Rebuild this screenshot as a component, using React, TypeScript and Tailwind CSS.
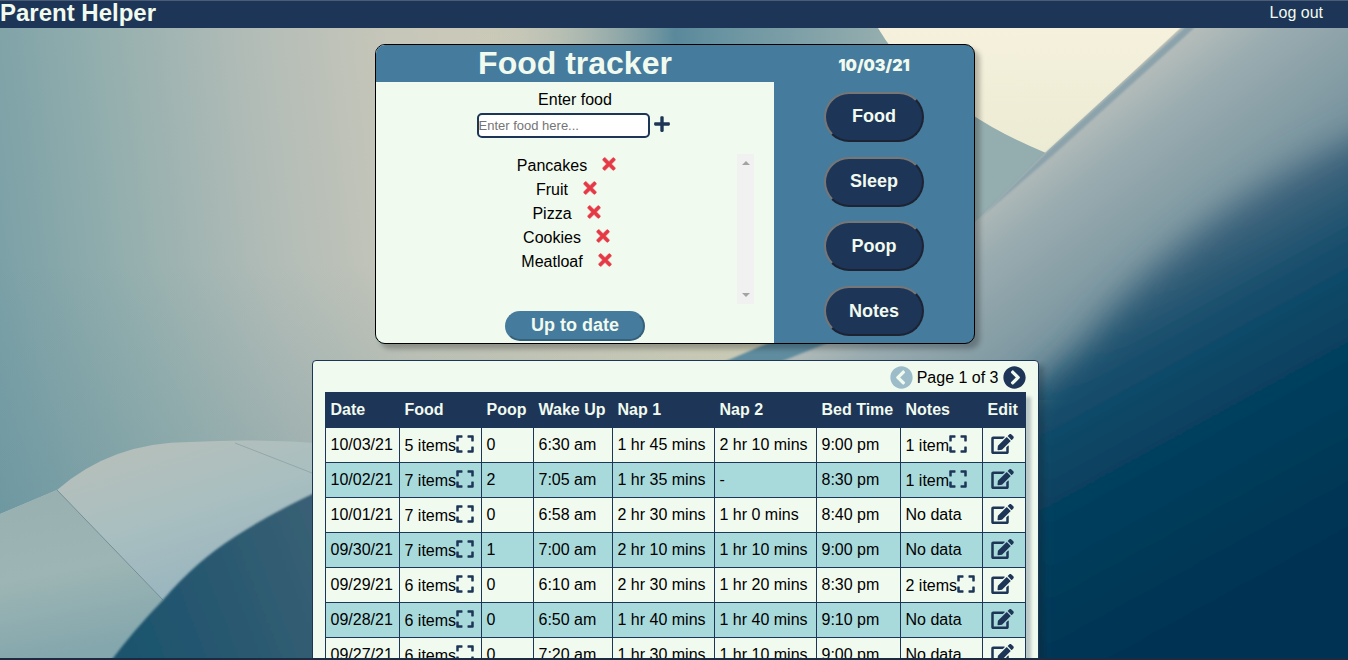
import type { ReactNode } from "react";
import {
  FaChevronCircleLeft,
  FaChevronCircleRight,
  FaEdit,
  FaExpand,
  FaPlus,
  FaTimes,
} from "react-icons/fa";

type Day = {
  date: string;
  food: string;
  poop: string;
  wake: string;
  nap1: string;
  nap2: string;
  bed: string;
  notes: string;
};

const foods = ["Pancakes", "Fruit", "Pizza", "Cookies", "Meatloaf"];
const sections = ["Food", "Sleep", "Poop", "Notes"];

const days: Day[] = [
  { date: "10/03/21", food: "5 items", poop: "0", wake: "6:30 am", nap1: "1 hr 45 mins", nap2: "2 hr 10 mins", bed: "9:00 pm", notes: "1 item" },
  { date: "10/02/21", food: "7 items", poop: "2", wake: "7:05 am", nap1: "1 hr 35 mins", nap2: "-", bed: "8:30 pm", notes: "1 item" },
  { date: "10/01/21", food: "7 items", poop: "0", wake: "6:58 am", nap1: "2 hr 30 mins", nap2: "1 hr 0 mins", bed: "8:40 pm", notes: "No data" },
  { date: "09/30/21", food: "7 items", poop: "1", wake: "7:00 am", nap1: "2 hr 10 mins", nap2: "1 hr 10 mins", bed: "9:00 pm", notes: "No data" },
  { date: "09/29/21", food: "6 items", poop: "0", wake: "6:10 am", nap1: "2 hr 30 mins", nap2: "1 hr 20 mins", bed: "8:30 pm", notes: "2 items" },
  { date: "09/28/21", food: "6 items", poop: "0", wake: "6:50 am", nap1: "1 hr 40 mins", nap2: "1 hr 40 mins", bed: "9:10 pm", notes: "No data" },
  { date: "09/27/21", food: "6 items", poop: "0", wake: "7:20 am", nap1: "1 hr 30 mins", nap2: "1 hr 10 mins", bed: "9:00 pm", notes: "No data" },
];

const columns = [
  { name: "Date", width: "w-[74px]" },
  { name: "Food", width: "w-[82px]" },
  { name: "Poop", width: "w-[52px]" },
  { name: "Wake Up", width: "w-[79px]" },
  { name: "Nap 1", width: "w-[102px]" },
  { name: "Nap 2", width: "w-[102px]" },
  { name: "Bed Time", width: "w-[84px]" },
  { name: "Notes", width: "w-[82px]" },
  { name: "Edit", width: "w-[43px]" },
];

function Backdrop() {
  return (
    <svg
      className="absolute inset-0 h-full w-full"
      viewBox="0 0 1348 660"
      preserveAspectRatio="none"
      aria-hidden="true"
    >
      <defs>
        <linearGradient id="wall" gradientUnits="userSpaceOnUse" x1="-40" y1="200" x2="760" y2="110">
          <stop offset="0" stopColor="#759da5" />
          <stop offset="0.2" stopColor="#94afae" />
          <stop offset="0.38" stopColor="#b2bcb7" />
          <stop offset="0.55" stopColor="#c6c6b9" />
          <stop offset="1" stopColor="#d8d3b8" />
        </linearGradient>
        <linearGradient id="wallShade" x1="0" y1="0" x2="0" y2="1">
          <stop offset="0.4" stopColor="#5c8b98" stopOpacity="0" />
          <stop offset="0.85" stopColor="#5c8b98" stopOpacity="0.35" />
        </linearGradient>
        <linearGradient id="fold" gradientUnits="userSpaceOnUse" x1="470" y1="0" x2="880" y2="0">
          <stop offset="0" stopColor="#c9c9b8" stopOpacity="0" />
          <stop offset="0.5" stopColor="#5a899b" />
          <stop offset="0.62" stopColor="#6a94a1" />
          <stop offset="1" stopColor="#94adae" />
        </linearGradient>
        <linearGradient id="cream" x1="0" y1="0" x2="0" y2="1">
          <stop offset="0" stopColor="#f7f2df" />
          <stop offset="1" stopColor="#ecebd3" />
        </linearGradient>
        <linearGradient id="band" gradientUnits="userSpaceOnUse" x1="1060" y1="110" x2="1170" y2="250">
          <stop offset="0" stopColor="#bfc3be" />
          <stop offset="0.4" stopColor="#9aacb0" />
          <stop offset="1" stopColor="#7b96a0" />
        </linearGradient>
        <linearGradient id="deep" gradientUnits="userSpaceOnUse" x1="1130" y1="250" x2="1300" y2="560">
          <stop offset="0" stopColor="#4c6c82" />
          <stop offset="0.28" stopColor="#154d6b" />
          <stop offset="0.55" stopColor="#053f5e" />
          <stop offset="1" stopColor="#003353" />
        </linearGradient>
        <linearGradient id="ridge" gradientUnits="userSpaceOnUse" x1="180" y1="440" x2="230" y2="600">
          <stop offset="0" stopColor="#b4bfbb" />
          <stop offset="0.4" stopColor="#a9bfc0" />
          <stop offset="1" stopColor="#97b3bf" />
        </linearGradient>
        <linearGradient id="ridgeNear" gradientUnits="userSpaceOnUse" x1="0" y1="500" x2="30" y2="660">
          <stop offset="0" stopColor="#98b1b0" />
          <stop offset="0.5" stopColor="#9db5b4" />
          <stop offset="1" stopColor="#84a7ad" />
        </linearGradient>
        <linearGradient id="hollow" gradientUnits="userSpaceOnUse" x1="120" y1="640" x2="330" y2="560">
          <stop offset="0" stopColor="#1b536d" />
          <stop offset="1" stopColor="#385f74" />
        </linearGradient>
        <filter id="haze" x="-20%" y="-20%" width="140%" height="140%">
          <feGaussianBlur stdDeviation="16" />
        </filter>
        <filter id="soft" x="-20%" y="-20%" width="140%" height="140%">
          <feGaussianBlur stdDeviation="1" />
        </filter>
      </defs>
      <rect width="1348" height="660" fill="url(#wall)" />
      <rect width="1348" height="660" fill="url(#wallShade)" />
      <path d="M470 0H900L1100 140L980 240L760 300L470 200Z" fill="url(#fold)" />
      <path d="M860 0H1210L1046 153Q1000 134 968 112Q905 75 878 28Z" fill="url(#cream)" />
      <path d="M1190 20L1046 152L975 222L780 342L740 362V400H1348V0H1210Z" fill="url(#band)" />
      <path d="M724 362L780 338L840 338L780 362Z" fill="#5f8c9f" filter="url(#soft)" />
      <path d="M1204 8L1182 30L1046 153L974 223L1052 156L1192 30L1214 8Z" fill="#8ba3ab" filter="url(#soft)" />
      <path
        d="M1420 105Q1290 160 1205 226Q1130 284 1080 345L1015 400V720H1420Z"
        fill="url(#deep)"
        filter="url(#haze)"
      />
      <path d="M0 514L57 490Q112 442 190 442Q260 438 330 444V520L160 660H0Z" fill="url(#ridge)" />
      <path d="M0 514L57 490L163 600L112 660H0Z" fill="url(#ridgeNear)" />
      <path d="M57 490L163 600" stroke="#768f99" fill="none" />
      <path d="M235 443L312 473" stroke="#94a7a9" fill="none" />
      <path
        d="M110 662Q134 630 163 600Q195 562 236 536Q276 510 330 486V662Z"
        fill="url(#hollow)"
        filter="url(#soft)"
      />
    </svg>
  );
}

function Cell({ children }: { children: ReactNode }) {
  return <td className="h-[35px] border border-[#1d3557] py-0 pr-0 pl-[5px] whitespace-nowrap">{children}</td>;
}

function Expandable({ text }: { text: string }) {
  if (text === "No data") return <>{text}</>;
  return (
    <div className="flex items-center pt-px">
      {text}
      <button type="button" aria-label={`Show ${text}`} className="pb-1 text-[#1d3557]">
        <FaExpand className="h-5 w-[18px]" />
      </button>
    </div>
  );
}

function Tracker() {
  return (
    <section className="flex w-[600px] max-w-full overflow-hidden rounded-[10px] border border-black bg-[#457b9d] shadow-[5px_5px_5px_rgba(0,0,0,0.25)]">
      <div className="flex flex-1 flex-col items-center bg-[#f1faee]">
        <h2 className="w-full bg-[#457b9d] text-center text-[32px] leading-[37px] font-bold text-[#f1faee]">
          Food tracker
        </h2>
        <label htmlFor="food" className="mt-[9px] leading-[18px]">
          Enter food
        </label>
        <form className="mt-1 flex items-center gap-1 pr-1">
          <input
            id="food"
            type="text"
            placeholder="Enter food here..."
            className="h-[25px] w-[173px] rounded-[5px] border-2 border-[#1d3557] bg-white text-[13px] placeholder:text-[#757575]"
          />
          <button type="button" aria-label="Add food" className="pb-1 text-[#1d3557]">
            <FaPlus className="h-[18px] w-4" />
          </button>
        </form>
        <div className="mt-4 flex h-[150px] w-9/10 justify-between">
          <ul className="flex-1">
            {foods.map((food) => (
              <li key={food} className="flex h-6 items-center justify-center gap-[15px]">
                {food}
                <button type="button" aria-label={`Remove ${food}`} className="pb-1 text-[#e63946]">
                  <FaTimes className="h-[18px] w-[14px] stroke-current stroke-[24px]" />
                </button>
              </li>
            ))}
          </ul>
          <div className="flex w-[17px] flex-col items-center justify-between bg-[#f1f1f1] py-[7px]" aria-hidden="true">
            <svg className="h-1 w-2" viewBox="0 0 8 4">
              <path d="M4 0L8 4H0Z" fill="#a3a3a3" />
            </svg>
            <svg className="h-1 w-2" viewBox="0 0 8 4">
              <path d="M0 0H8L4 4Z" fill="#a3a3a3" />
            </svg>
          </div>
        </div>
        <button
          type="button"
          className="mt-[7px] mb-0.5 h-[30px] rounded-full border-2 border-t-[#457b9d] border-r-[#35607b] border-b-[#35607b] border-l-[#457b9d] bg-[#457b9d] px-6 pb-0.5 text-[18px] leading-6 font-bold text-[#f1faee]"
        >
          Up to date
        </button>
      </div>
      <div className="flex w-[200px] flex-col items-center justify-between pt-2 pb-[7px]">
        <p className="font-['Inter',sans-serif] text-[16px] leading-6 font-black text-[#f1faee]">10/03/21</p>
        {sections.map((name) => (
          <button
            key={name}
            type="button"
            className="h-[50px] w-[100px] rounded-full border-2 border-t-[#767676] border-r-[#1d2333] border-b-[#1d2333] border-l-[#767676] bg-[#1d3557] text-[18px] font-bold text-[#f1faee]"
          >
            {name}
          </button>
        ))}
      </div>
    </section>
  );
}

function History() {
  return (
    <section className="mt-4 rounded-[4px] border border-[#1d3557] bg-[#f1faee] px-3 pt-[5px] pb-6 shadow-[5px_5px_5px_rgba(0,0,0,0.2)]">
      <nav className="flex items-center justify-end gap-1 pb-[3px] text-[#1d3557]" aria-label="Pages">
        <button type="button" disabled aria-label="Previous page" className="text-[#9bbcc8]">
          <FaChevronCircleLeft className="size-[23px]" />
        </button>
        <span className="leading-[23px] text-black">Page 1 of 3</span>
        <button type="button" aria-label="Next page">
          <FaChevronCircleRight className="size-[23px]" />
        </button>
      </nav>
      <table className="w-[700px] table-fixed border-collapse shadow-[5px_5px_3px_rgba(29,53,87,0.25)]">
        <thead>
          <tr className="bg-[#1d3557] text-left text-[#f1faee]">
            {columns.map((column) => (
              <th
                key={column.name}
                scope="col"
                className={`h-[35px] border border-[#1d3557] py-0 pr-0 pl-[5px] font-bold whitespace-nowrap ${column.width}`}
              >
                {column.name}
              </th>
            ))}
          </tr>
        </thead>
        <tbody>
          {days.map((day) => (
            <tr key={day.date} className="even:bg-[#a8dadc]">
              <Cell>{day.date}</Cell>
              <Cell>
                <Expandable text={day.food} />
              </Cell>
              <Cell>{day.poop}</Cell>
              <Cell>{day.wake}</Cell>
              <Cell>{day.nap1}</Cell>
              <Cell>{day.nap2}</Cell>
              <Cell>{day.bed}</Cell>
              <Cell>
                <Expandable text={day.notes} />
              </Cell>
              <Cell>
                <button type="button" aria-label={`Edit ${day.date}`} className="ml-[3px] flex pb-[3px] text-[#1d3557]">
                  <FaEdit className="h-5 w-[23px]" />
                </button>
              </Cell>
            </tr>
          ))}
        </tbody>
      </table>
    </section>
  );
}

export default function App() {
  return (
    <div className="relative flex h-screen flex-col overflow-hidden font-['Liberation_Sans',Arial,sans-serif] text-[16px] text-black">
      <Backdrop />
      <header className="relative flex h-7 shrink-0 items-center justify-between border-t border-[#4a5c76] bg-[#1d3557] pr-[25px] text-[#f1faee]">
        <h1 className="pb-1 text-[24px] leading-6 font-bold">Parent Helper</h1>
        <a href="#logout" className="pb-1">
          Log out
        </a>
      </header>
      <main className="relative flex min-h-0 flex-1 flex-col items-center overflow-y-auto pt-4 pl-0.5 [scrollbar-width:none]">
        <div className="flex shrink-0 flex-col items-center">
          <Tracker />
          <History />
        </div>
      </main>
      <div className="relative h-0.5 shrink-0 bg-[#1c2b40]" />
    </div>
  );
}
